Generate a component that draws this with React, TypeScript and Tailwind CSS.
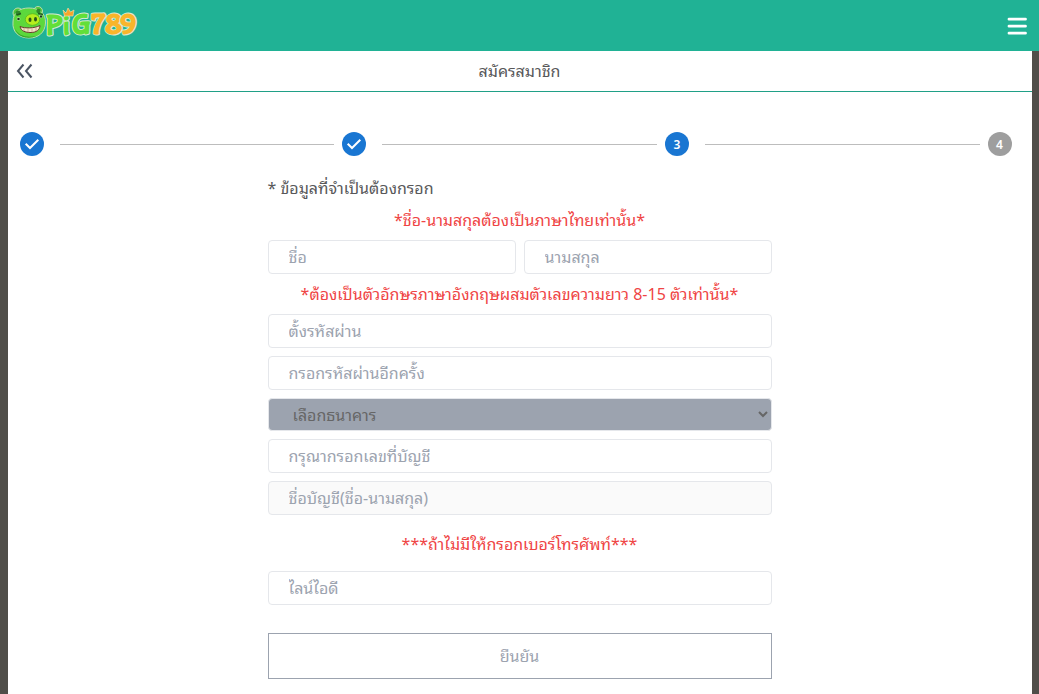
import React from 'react';

const Logo: React.FC = () => (
  <svg width="132" height="51" viewBox="11 0 132 51" role="img" aria-label="PiG789">
    <g stroke="#b9dcae" strokeWidth="1">
      <circle cx="18" cy="13" r="5" fill="#4fc436" />
      <circle cx="38" cy="11" r="4.5" fill="#4fc436" />
      <path d="M13 22C13 12 20 8 29 8C39 8 46 13 45.500 23C45 33 38 38 29 38C19 38 12 32 13 22Z" fill="#5cd83c" />
    </g>
    <circle cx="18" cy="13" r="2.500" fill="#2f8a2b" />
    <circle cx="38.500" cy="11" r="2.200" fill="#2f8a2b" />
    <path d="M15 28C18 36 27 38 36 36C31 39 17 39 15 28Z" fill="#35a52b" />
    <path d="M16.500 15L21 13.500M38 13.500L43 14.500" stroke="#1f5c20" strokeWidth="1.500" />
    <circle cx="18.500" cy="19" r="1.800" fill="#dff5d2" />
    <circle cx="18.500" cy="19" r="1.300" fill="#173c18" />
    <circle cx="40.800" cy="16.500" r="1.800" fill="#dff5d2" />
    <circle cx="41" cy="16.500" r="1.300" fill="#173c18" />
    <ellipse cx="32.500" cy="19.500" rx="7.200" ry="5.800" fill="#b6ee1d" stroke="#58b81f" strokeWidth="0.800" />
    <ellipse cx="30" cy="19.800" rx="1.500" ry="2.300" fill="#2b5718" />
    <ellipse cx="35.500" cy="19.300" rx="1.500" ry="2.300" fill="#2b5718" />
    <path d="M20 26.500C25 28.500 34 28.500 40 25.500C40 30 36 32.500 31 32.500C25 32.500 21 31 20 26.500Z" fill="#f4dfc7" stroke="#653f2b" strokeWidth="1" />
    <path d="M24 28V31M28 28.500V32M32 28.500V32.500M36 27.500V31.500" stroke="#a97c5c" strokeWidth="0.500" />
    <g
      className="font-['Bubblegum_Sans','Roboto_Condensed','Open_Sans',sans-serif] text-[29px] font-bold"
      stroke="#d9ead2"
      strokeWidth="2"
      strokeLinejoin="round"
      paintOrder="stroke"
    >
      <text x="46" y="34" fill="#62df39">P</text>
      <text x="63" y="34" fill="#62df39">i</text>
      <text x="72" y="33" fill="#62df39">G</text>
      <text x="91" y="33" fill="#f9b52a">7</text>
      <text x="105" y="33" fill="#f9b52a">8</text>
      <text x="120" y="33" fill="#f9b52a">9</text>
    </g>
    <path d="M63 10L66 13L68 8L70.500 12L74 10L73 16H64.500Z" fill="#f7a52a" stroke="#fae3b0" strokeWidth="0.600" />
  </svg>
);

const steps = [
  { id: 1, status: 'done' },
  { id: 2, status: 'done' },
  { id: 3, status: 'active' },
  { id: 4, status: 'pending' },
];

const Stepper: React.FC = () => (
  <ol className="mt-10 flex items-center pr-5 pl-3">
    {steps.map((step) => (
      <li key={step.id} className={step.id === 1 ? 'flex items-center' : 'flex flex-1 items-center'}>
        {step.id > 1 && <span className="mr-2 ml-4 h-px flex-1 bg-[#bdbdbd]" />}
        <span
          className={`flex size-6 items-center justify-center rounded-full text-xs text-white ${
            step.status === 'pending' ? 'bg-[#9e9e9e]' : 'bg-[#1976d2]'
          }`}
        >
          {step.status === 'done' ? (
            <svg className="size-6" viewBox="0 0 24 24" fill="none" stroke="currentColor" strokeWidth="2" role="img" aria-label="สำเร็จ">
              <path d="M5.700 11.700L10 16L18.300 7.700" />
            </svg>
          ) : (
            <span className="font-semibold">{step.id}</span>
          )}
        </span>
      </li>
    ))}
  </ol>
);

interface FieldProps {
  label: string;
  type?: string;
  disabled?: boolean;
}

const Field: React.FC<FieldProps> = ({ label, type = 'text', disabled }) => (
  <input
    type={type}
    aria-label={label}
    placeholder={label}
    disabled={disabled}
    className="h-[34px] w-full min-w-0 rounded border border-[#e5e7eb] bg-white px-5 pb-0.5 placeholder:text-[#9ca3af] disabled:bg-[#fafafa]"
  />
);

export default function App() {
  return (
    <div className="min-h-screen bg-[#504e49] font-['Noto_Sans_Thai_Looped','Noto_Sans',sans-serif] text-base text-[#58585a]">
      <header className="flex h-[51px] items-center justify-between bg-[#20b295] pr-3 pl-[11px]">
        <a href="#">
          <Logo />
        </a>
        <button type="button" aria-label="เมนู" className="text-white">
          <svg width="20" height="20" viewBox="0 0 20 20" stroke="currentColor" strokeWidth="2.800" strokeLinecap="round">
            <path d="M2 3.200H18.500M2 10.200H18.500M2 17.200H18.500" />
          </svg>
        </button>
      </header>

      <main className="mx-auto min-h-[calc(100vh-51px)] max-w-5xl bg-white">
        <div className="grid h-[41px] grid-cols-[1fr_auto_1fr] items-center border-b border-[#20a087] px-2">
          <button type="button" aria-label="ย้อนกลับ" className="w-fit text-[#4b5563]">
            <svg width="18" height="16" viewBox="0 0 18 16" fill="none" stroke="currentColor" strokeWidth="2">
              <path d="M7.500 1.500L2 8L7.500 14.500M15.500 1.500L10 8L15.500 14.500" />
            </svg>
          </button>
          <h1 className="pb-0.5">สมัครสมาชิก</h1>
        </div>

        <Stepper />

        <form className="mx-auto mt-[19px] w-full max-w-[504px]">
          <p className="mb-2">* ข้อมูลที่จำเป็นต้องกรอก</p>
          <p className="mb-[9px] text-center text-[#ef4444]">*ชื่อ-นามสกุลต้องเป็นภาษาไทยเท่านั้น*</p>
          <div className="flex gap-2">
            <Field label="ชื่อ" />
            <Field label="นามสกุล" />
          </div>
          <p className="mt-[7px] mb-[9px] text-center text-[#ef4444]">
            *ต้องเป็นตัวอักษรภาษาอังกฤษผสมตัวเลขความยาว 8-15 ตัวเท่านั้น*
          </p>
          <div className="flex flex-col gap-2">
            <Field label="ตั้งรหัสผ่าน" type="password" />
            <Field label="กรอกรหัสผ่านอีกครั้ง" type="password" />
            <select
              aria-label="เลือกธนาคาร"
              className="h-[33px] w-full rounded border border-[#e5e7eb] bg-[#9ca3af] pb-0.5 pl-5 text-[#666]"
            >
              <option>เลือกธนาคาร</option>
            </select>
            <Field label="กรุณากรอกเลขที่บัญชี" />
            <Field label="ชื่อบัญชี(ชื่อ-นามสกุล)" disabled />
          </div>
          <p className="my-4 text-center text-[#ef4444]">***ถ้าไม่มีให้กรอกเบอร์โทรศัพท์***</p>
          <Field label="ไลน์ไอดี" />
          <button type="submit" className="mt-7 h-[46px] w-full border border-[#9ca3af] pb-0.5 text-[#9ca3af]">
            ยืนยัน
          </button>
        </form>
      </main>
    </div>
  );
}
